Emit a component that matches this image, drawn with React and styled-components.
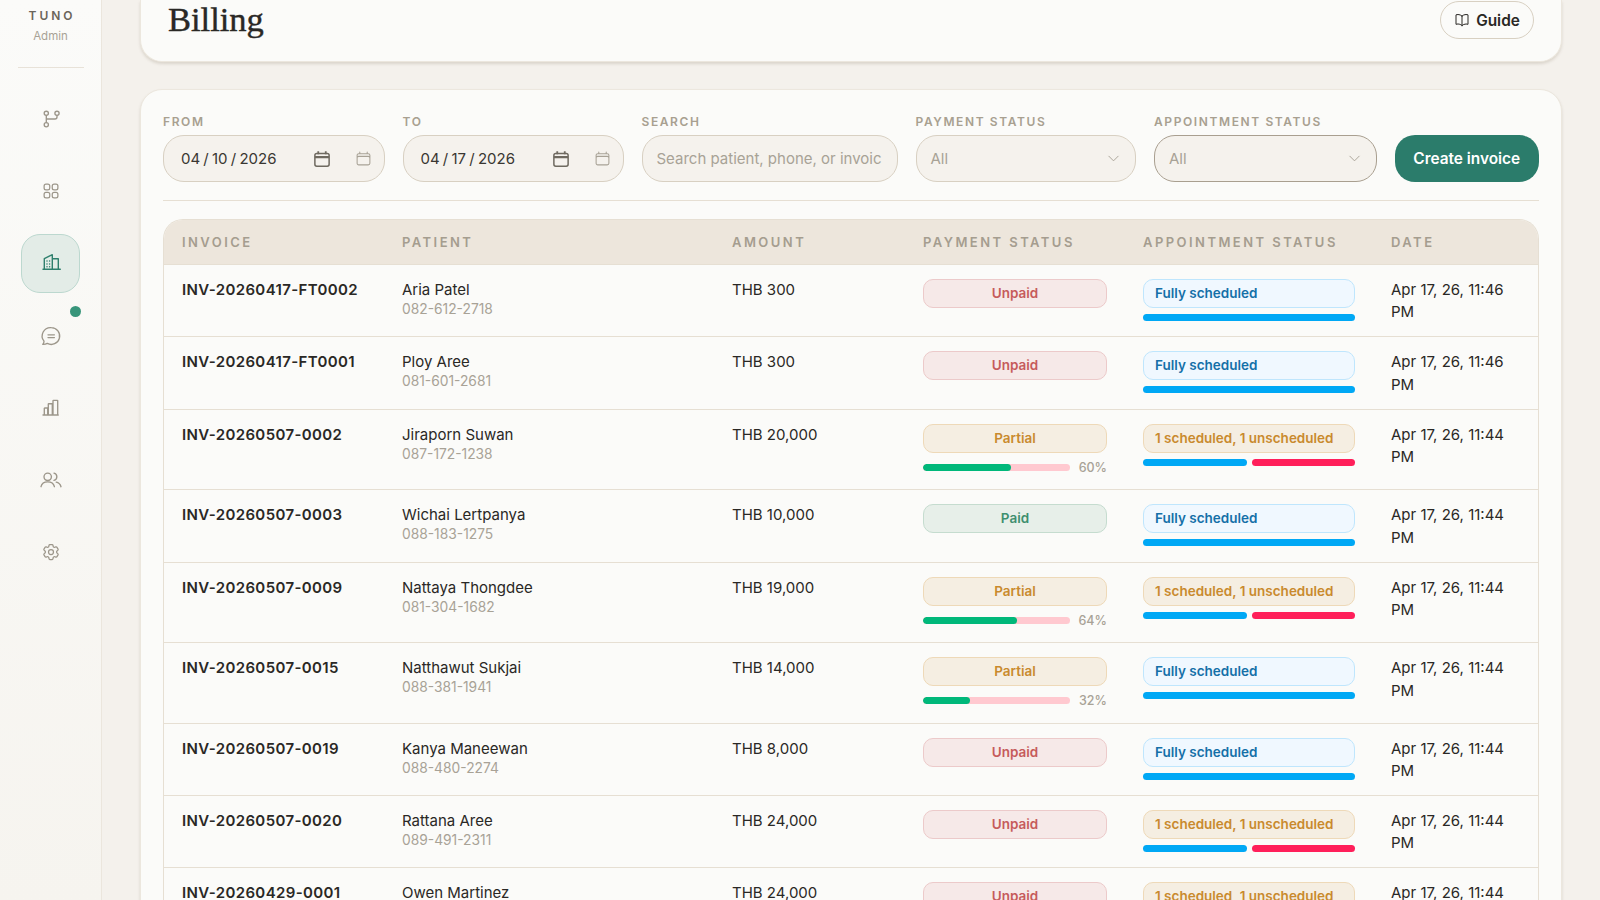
import React from "react";
import styled, { createGlobalStyle } from "styled-components";
import {
  HiOutlineSquares2X2, HiOutlineCog6Tooth, HiOutlineBookOpen, HiOutlineCalendar, HiOutlineChevronDown,
} from "react-icons/hi2";

const Global = createGlobalStyle`
  html, body { margin: 0; padding: 0; height: 100%; overflow: hidden; background: #f4f1ec; }
  body { font-family: Inter, "Liberation Sans", sans-serif; color: #2a2825; }
  * { box-sizing: border-box; }
`;

const Shell = styled.div`display: flex; width: 1600px; height: 900px; overflow: hidden;`;

const Sidebar = styled.aside`
  width: 102px; flex: none; height: 100%;
  background: linear-gradient(180deg, #fbfbf9 0%, #f6f4ef 100%);
  border-right: 1px solid #ebe6dd;
  display: flex; flex-direction: column; align-items: center;
  padding-top: 9px;
`;
const Brand = styled.div`
  font-size: 12px; font-weight: 600; letter-spacing: 3px; color: #6b655b; line-height: 14px; padding-left: 3px;
`;
const Role = styled.div`font-size: 11.5px; color: #a8a296; line-height: 14px; margin-top: 6px;`;
const SideRule = styled.div`width: 66px; height: 1px; background: #e8e2d8; margin: 24px 0 21.5px;`;
const Nav = styled.nav`display: flex; flex-direction: column; gap: 13.2px;`;
const NavItem = styled.div`
  position: relative; width: 59px; height: 59px; border-radius: 19px;
  display: flex; align-items: center; justify-content: center;
  color: ${p => (p.$active ? "#2f7f6d" : "#9c968a")};
  background: ${p => (p.$active ? "#e3ece7" : "transparent")};
  border: 1px solid ${p => (p.$active ? "#bcd8cf" : "transparent")};
`;
const Dot = styled.span`
  position: absolute; top: -1px; right: -2px; width: 11px; height: 11px; border-radius: 50%; background: #38957a;
`;

const Main = styled.main`
  flex: 1; min-width: 0; padding: 0 38px; display: flex; flex-direction: column; gap: 27px; overflow: hidden;
`;
const Card = styled.section`
  background: #fbfbf9; border: 1px solid #ece7de; border-radius: 22px;
  box-shadow: 0 2px 3px rgba(120, 105, 80, 0.2);
`;
const HeaderCard = styled(Card)`
  flex: none; height: 62px; border-top: none; border-top-left-radius: 0; border-top-right-radius: 0;
  display: flex; justify-content: space-between; align-items: flex-start;
  padding: 1px 27px 0 27px;
`;
const Title = styled.h1`
  margin: 0; font-family: "Liberation Serif", serif; font-weight: 400; font-size: 34.5px; line-height: 36px;
  color: #2a2825; -webkit-text-stroke: 0.4px #2a2825;
`;
const GuideButton = styled.button`
  height: 38px; width: 94px; border-radius: 19px; border: 1px solid #d8d0c2; background: #fbfbf9;
  display: flex; align-items: center; justify-content: center; gap: 6px;
  font: 600 15.4px Inter, sans-serif; color: #2a2825; padding: 0;
`;

const ListCard = styled(Card)`flex: none; padding: 24px 22px 0 22px;`;
const Filters = styled.div`
  display: grid; grid-template-columns: 221.5px 221px 256px 220.5px 222.5px 144.5px; column-gap: 18px;
  align-items: end; padding-bottom: 18px; border-bottom: 1px solid #e6dfd3;
`;
const Field = styled.label`display: flex; flex-direction: column; gap: 5px; min-width: 0;`;
const FieldLabel = styled.span`
  font-size: 12px; font-weight: 600; letter-spacing: 1.6px; line-height: 16px; color: #a8a090; text-transform: uppercase;
`;
const Control = styled.div`
  height: 47px; border-radius: 21px; background: #f5f2ed;
  border: 1.5px solid ${p => (p.$focus ? "#a99f90" : "#d8d0c2")};
  display: flex; align-items: center; padding: 0 ${p => p.$pr || 14}px 0 ${p => p.$pl || 17}px;
  font-size: 15px; color: ${p => p.$muted ? "#a8a296" : "#3a3732"}; overflow: hidden; white-space: nowrap;
`;
const DateText = styled.span`flex: 1; word-spacing: -1px;`;
const PickerIcon = styled.svg`flex: none; width: 18px; height: 18px; margin-right: 24px; color: #6f6a60;`;
const SelectText = styled.span`flex: 1;`;
const CreateButton = styled.button`
  height: 47px; border: none; border-radius: 20px; background: #2b7c6b; color: #fff;
  font: 600 15.4px Inter, sans-serif; padding: 0;
`;

const Table = styled.div`
  margin-top: 18px; border: 1px solid #e6dfd3; border-bottom: none; border-radius: 20px 20px 0 0; overflow: hidden;
`;
const Columns = "220px 330px 191px 220px 248px 1fr";
const HeadRow = styled.div`
  display: grid; grid-template-columns: ${Columns}; height: 45px; align-items: center;
  background: #ede6dc; border-bottom: 1px solid #e6dfd3;
`;
const HeadCell = styled.div`
  padding-left: 18px; font-size: 13px; font-weight: 600; letter-spacing: 2.45px; color: #a59d8f; text-transform: uppercase; white-space: nowrap;
`;
const Row = styled.div`
  display: grid; grid-template-columns: ${Columns}; align-items: start;
  padding: 14px 0 12.6px; border-bottom: 1px solid #e6dfd3; line-height: 22px; font-size: 15px;
`;
const Cell = styled.div`padding: 0 18px; min-width: 0;`;
const InvoiceCell = styled(Cell)`font-weight: 600; letter-spacing: 0.37px; color: #2a2825; white-space: nowrap;`;
const Phone = styled.div`font-size: 13.8px; line-height: 16px; color: #a8a296;`;
const Badge = styled.div`
  height: 29px; border-radius: 10px; font-size: 13.5px; font-weight: 600; line-height: 26px;
  border: 1.5px solid ${p => p.$b}; background: ${p => p.$bg}; color: ${p => p.$c};
  text-align: ${p => (p.$left ? "left" : "center")}; padding: 0 ${p => (p.$left ? 11 : 0)}px; white-space: nowrap;
`;
const Progress = styled.div`display: flex; align-items: center; gap: 9px; margin-top: 5.5px; height: 18.4px;`;
const Track = styled.div`flex: 1; height: 7px; border-radius: 4px; background: #ffc9d0; overflow: hidden;`;
const Fill = styled.div`height: 100%; background: #00b87a; border-radius: 4px;`;
const Pct = styled.span`font-size: 12.5px; font-weight: 500; color: #a8a296; line-height: 15px;`;
const Bars = styled.div`display: flex; gap: 5px; margin-top: 6px;`;
const Bar = styled.div`flex: 1; height: 7px; border-radius: 4px; background: ${p => (p.$red ? "#ff1f5a" : "#00a8f5")};`;
const DateCell = styled(Cell)`padding-right: 10px; line-height: 22.4px;`;

const tones = {
  Unpaid: { $bg: "#f6e9e8", $b: "#eccaca", $c: "#c65b5b" },
  Partial: { $bg: "#f5eee2", $b: "#eed9b8", $c: "#c98a2e" },
  Paid: { $bg: "#e7efe9", $b: "#c5dccf", $c: "#3f8f6f" },
};
const full = { $bg: "#f0f8ff", $b: "#bfe6fd", $c: "#1570a8" };

const rows = [
  ["INV-20260417-FT0002", "Aria Patel", "082-612-2718", "THB 300", "Unpaid", null, true, "Apr 17, 26, 11:46 PM"],
  ["INV-20260417-FT0001", "Ploy Aree", "081-601-2681", "THB 300", "Unpaid", null, true, "Apr 17, 26, 11:46 PM"],
  ["INV-20260507-0002", "Jiraporn Suwan", "087-172-1238", "THB 20,000", "Partial", 60, false, "Apr 17, 26, 11:44 PM"],
  ["INV-20260507-0003", "Wichai Lertpanya", "088-183-1275", "THB 10,000", "Paid", null, true, "Apr 17, 26, 11:44 PM"],
  ["INV-20260507-0009", "Nattaya Thongdee", "081-304-1682", "THB 19,000", "Partial", 64, false, "Apr 17, 26, 11:44 PM"],
  ["INV-20260507-0015", "Natthawut Sukjai", "088-381-1941", "THB 14,000", "Partial", 32, true, "Apr 17, 26, 11:44 PM"],
  ["INV-20260507-0019", "Kanya Maneewan", "088-480-2274", "THB 8,000", "Unpaid", null, true, "Apr 17, 26, 11:44 PM"],
  ["INV-20260507-0020", "Rattana Aree", "089-491-2311", "THB 24,000", "Unpaid", null, false, "Apr 17, 26, 11:44 PM"],
  ["INV-20260429-0001", "Owen Martinez", "", "THB 24,000", "Unpaid", null, false, "Apr 17, 26, 11:44 PM"],
];

const Icon = ({ w = 1.35, children }) => (
  <svg width="24" height="24" viewBox="0 0 24 24" fill="none" stroke="currentColor" strokeWidth={w} strokeLinecap="round" strokeLinejoin="round">
    {children}
  </svg>
);
const Branch = () => (
  <Icon>
    <circle cx="7.3" cy="6.3" r="2.1" /><circle cx="18" cy="6.3" r="2.1" /><circle cx="7.3" cy="17.7" r="2.1" />
    <path d="M7.3 8.4v7.2M18 8.4V10a2 2 0 0 1-2 2H7.3" />
  </Icon>
);
const Building = () => (
  <Icon w={1.4}>
    <path d="M4 18.3h17.3M5.3 18.3V7.7l8-4v14.6M13.3 7.7h6v10.6" />
    <path d="M8 10h.01M10.6 10h.01M8 13h.01M10.6 13h.01M8 15.7h.01M10.6 15.7h.01" strokeWidth="1.5" />
  </Icon>
);
const Chat = () => (
  <Icon>
    <path d="M12.3 3.6a8.4 8.4 0 1 1-4 15.8c-1.4.8-2.9 1.1-4.6 1 .9-.9 1.3-2 1.3-3.2a8.4 8.4 0 0 1 7.3-13.6Z" />
    <path d="M9 10.8h6.4M9 13.6h6.4" />
  </Icon>
);
const Chart = () => (
  <Icon>
    <path d="M4 19h15.3M5.3 19v-6.6a.4.4 0 0 1 .4-.4h2.6a.4.4 0 0 1 .4.4V19M9.3 19V8.1a.4.4 0 0 1 .4-.4h3.2a.4.4 0 0 1 .4.4V19M14 19V4.7a.4.4 0 0 1 .4-.4h3.9a.4.4 0 0 1 .4.4V19" />
  </Icon>
);
const Users = () => (
  <Icon>
    <circle cx="8.7" cy="8.8" r="3.7" />
    <path d="M15 5.2a3.7 3.7 0 0 1 0 7.2M2 18.7c.7-3.2 3.2-4.9 6.7-4.9s6 1.7 6.7 4.9M17.2 14.2c2.5.5 4.1 2.1 4.8 4.5" />
  </Icon>
);
const Picker = () => (
  <PickerIcon viewBox="0 0 24 24" fill="none" stroke="currentColor" strokeWidth="2">
    <rect x="2.5" y="4.5" width="19" height="17" rx="2.5" />
    <path d="M2.5 9.5h19" strokeWidth="3" /><path d="M7 1.5v4M17 1.5v4" strokeWidth="2.4" />
  </PickerIcon>
);

const DateField = ({ label, value }) => (
  <Field>
    <FieldLabel>{label}</FieldLabel>
    <Control $pr={12}>
      <DateText>{value}</DateText>
      <Picker />
      <HiOutlineCalendar size={17} color="#a8a296" />
    </Control>
  </Field>
);
const SelectField = ({ label, focus }) => (
  <Field>
    <FieldLabel>{label}</FieldLabel>
    <Control $muted $pl={14} $focus={focus}>
      <SelectText>All</SelectText>
      <HiOutlineChevronDown size={15} color="#a8a296" />
    </Control>
  </Field>
);

export default function App() {
  return (
    <Shell>
      <Global />
      <Sidebar>
        <Brand>TUNO</Brand>
        <Role>Admin</Role>
        <SideRule />
        <Nav>
          <NavItem><Branch /></NavItem>
          <NavItem><HiOutlineSquares2X2 size={20} /></NavItem>
          <NavItem $active><Building /></NavItem>
          <NavItem><Chat /><Dot /></NavItem>
          <NavItem><Chart /></NavItem>
          <NavItem><Users /></NavItem>
          <NavItem><HiOutlineCog6Tooth size={20} /></NavItem>
        </Nav>
      </Sidebar>
      <Main>
        <HeaderCard>
          <Title>Billing</Title>
          <GuideButton><HiOutlineBookOpen size={16} />Guide</GuideButton>
        </HeaderCard>
        <ListCard>
          <Filters>
            <DateField label="From" value="04 / 10 / 2026" />
            <DateField label="To" value="04 / 17 / 2026" />
            <Field>
              <FieldLabel>Search</FieldLabel>
              <Control $muted $pl={14} $pr={12}>Search patient, phone, or invoic</Control>
            </Field>
            <SelectField label="Payment status" />
            <SelectField label="Appointment status" focus />
            <CreateButton>Create invoice</CreateButton>
          </Filters>
          <Table>
            <HeadRow>
              {["Invoice", "Patient", "Amount", "Payment status", "Appointment status", "Date"].map(h => (
                <HeadCell key={h}>{h}</HeadCell>
              ))}
            </HeadRow>
            {rows.map(([id, name, phone, amount, pay, pct, isFull, date]) => (
              <Row key={id}>
                <InvoiceCell>{id}</InvoiceCell>
                <Cell>{name}<Phone>{phone}</Phone></Cell>
                <Cell>{amount}</Cell>
                <Cell>
                  <Badge {...tones[pay]}>{pay}</Badge>
                  {pct !== null && (
                    <Progress>
                      <Track><Fill style={{ width: `${pct}%` }} /></Track>
                      <Pct>{pct}%</Pct>
                    </Progress>
                  )}
                </Cell>
                <Cell>
                  <Badge $left {...(isFull ? full : tones.Partial)}>
                    {isFull ? "Fully scheduled" : "1 scheduled, 1 unscheduled"}
                  </Badge>
                  <Bars>
                    <Bar />
                    {!isFull && <Bar $red />}
                  </Bars>
                </Cell>
                <DateCell>{date}</DateCell>
              </Row>
            ))}
          </Table>
        </ListCard>
      </Main>
    </Shell>
  );
}
